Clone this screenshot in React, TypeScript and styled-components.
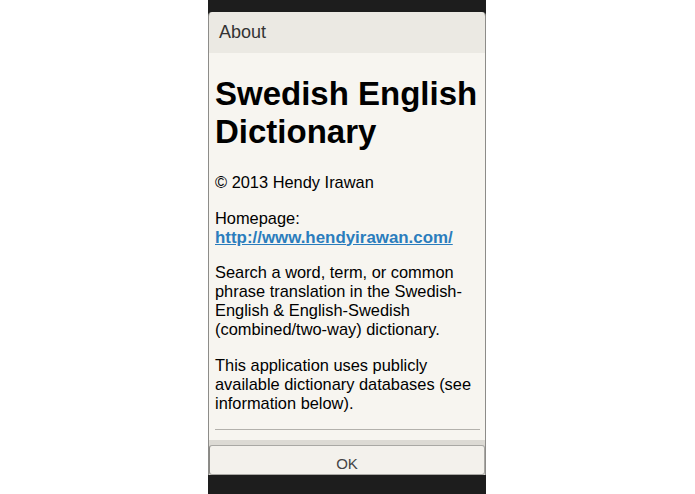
import React from 'react';
import styled, { createGlobalStyle } from 'styled-components';

const GlobalStyle = createGlobalStyle`
  html, body {
    margin: 0;
    padding: 0;
    background: #ffffff;
  }
`;

const Page = styled.div`
  display: flex;
  justify-content: center;
  height: 494px;
  padding-right: 1px;
  font-family: 'Liberation Sans', Arial, sans-serif;
`;

const Phone = styled.div`
  width: 278px;
  background: #1d1d1d;
  padding: 12px 0 19px;
  box-sizing: border-box;
  display: flex;
  flex-direction: column;
`;

const Dialog = styled.div`
  flex: 1;
  display: flex;
  flex-direction: column;
  min-height: 0;
  border-radius: 4px 4px 0 0;
  overflow: hidden;
  border-left: 1px solid #8d8c89;
  border-right: 1px solid #8d8c89;
  box-sizing: border-box;
`;

const Header = styled.div`
  height: 41px;
  flex-shrink: 0;
  display: flex;
  align-items: center;
  padding-left: 10px;
  background: #ebe9e3;
  color: #333333;
  font-size: 18px;
`;

const Body = styled.div`
  flex: 1;
  min-height: 0;
  overflow: hidden;
  padding: 0 5px 0 6px;
  background: #f7f5f0;
  color: #000000;
  font-size: 16.4px;
`;

const Title = styled.h1`
  font-size: 33px;
  font-weight: bold;
  line-height: 38px;
  margin: 22px 0;
`;

const Para = styled.p`
  margin: 16.5px 0;
  line-height: 19px;
`;

const Link = styled.a`
  color: #2b7dbd;
  font-size: 16.9px;
  font-weight: bold;
  line-height: 16px;
  text-decoration: underline;
`;

const Divider = styled.div`
  border-top: 1px solid #b3b1ac;
`;

const Footer = styled.div`
  flex-shrink: 0;
  background: #dcdad4;
  padding-top: 5px;
`;

const Button = styled.button`
  display: block;
  width: 100%;
  height: 30px;
  margin: 0;
  padding: 6px 0 0;
  border: 1px solid #a9a8a4;
  border-left-color: #8a8985;
  border-radius: 3px;
  background: #f3f1ec;
  color: #444444;
  font-family: 'Liberation Sans', Arial, sans-serif;
  font-size: 15px;
`;

export default function App() {
  return (
    <>
      <GlobalStyle />
      <Page>
        <Phone>
          <Dialog>
            <Header>About</Header>
            <Body>
              <Title>Swedish English Dictionary</Title>
              <Para>© 2013 Hendy Irawan</Para>
              <Para>
                Homepage:
                <br />
                <Link href="#">http://www.hendyirawan.com/</Link>
              </Para>
              <Para>
                Search a word, term, or common phrase translation in the
                Swedish-English &amp; English-Swedish (combined/two-way)
                dictionary.
              </Para>
              <Para>
                This application uses publicly available dictionary databases
                (see information below).
              </Para>
              <Divider />
            </Body>
            <Footer>
              <Button>OK</Button>
            </Footer>
          </Dialog>
        </Phone>
      </Page>
    </>
  );
}
